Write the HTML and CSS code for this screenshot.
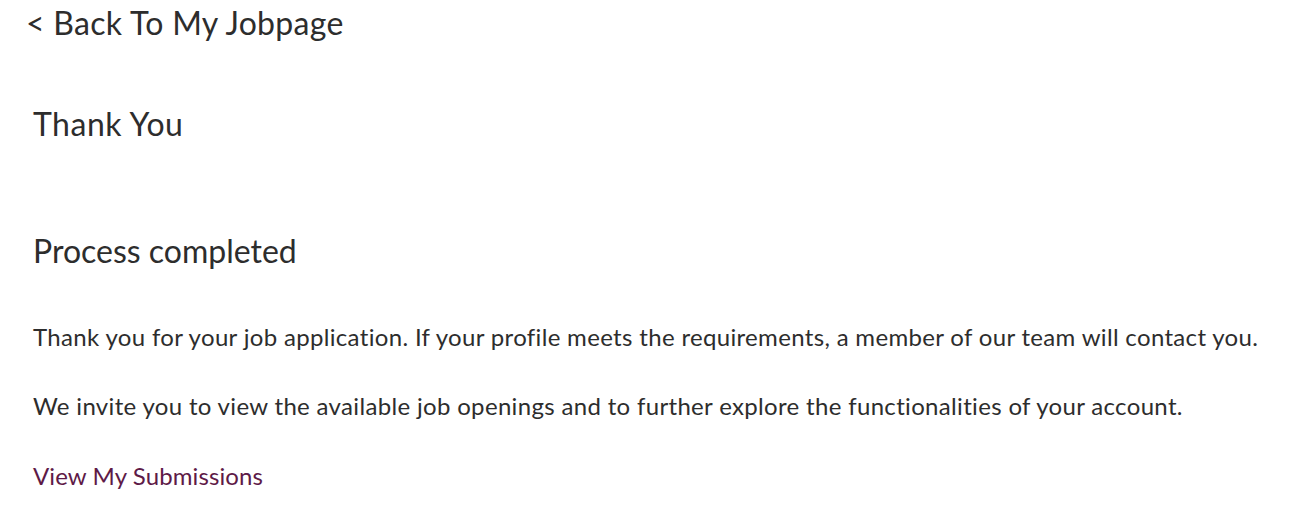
FILE: index.html
```html
<!DOCTYPE html>
<html lang="en">
<head>
<meta charset="utf-8">
<title>Thank You</title>
<link rel="stylesheet" href="styles.css">
</head>
<body>
<div class="page">
  <a class="back" href="#">&lt; Back To My Jobpage</a>
  <h1 class="title">Thank You</h1>
  <h2 class="subtitle">Process completed</h2>
  <p class="text">Thank you for your job application. If your profile meets the requirements, a member of our team will contact you.</p>
  <p class="text">We invite you to view the available job openings and to further explore the functionalities of your account.</p>
  <a class="link" href="#">View My Submissions</a>
</div>
</body>
</html>
```
FILE: styles.css
```css
html, body {
  margin: 0;
  padding: 0;
  background: #ffffff;
}
body {
  font-family: "Lato", "Open Sans", sans-serif;
  color: #2d2d2d;
}
.page {
  display: flex;
  flex-direction: column;
  align-items: flex-start;
  padding: 5px 0 0 26px;
}
.back {
  font-size: 32px;
  line-height: 36px;
  letter-spacing: 0.3px;
  color: #2d2d2d;
  text-decoration: none;
}
.title {
  margin: 65px 0 0 7px;
  font-size: 32px;
  font-weight: normal;
  line-height: 36px;
  letter-spacing: 0.5px;
}
.subtitle {
  margin: 91px 0 0 7px;
  font-size: 32px;
  font-weight: normal;
  line-height: 36px;
}
.text {
  margin: 54px 0 0 7px;
  font-size: 24px;
  line-height: 28px;
  letter-spacing: 0.33px;
}
.text + .text {
  margin-top: 41px;
}
.link {
  margin: 42px 0 0 7px;
  font-size: 24px;
  line-height: 28px;
  letter-spacing: 0.1px;
  color: #5e1a47;
  text-decoration: none;
}
```
